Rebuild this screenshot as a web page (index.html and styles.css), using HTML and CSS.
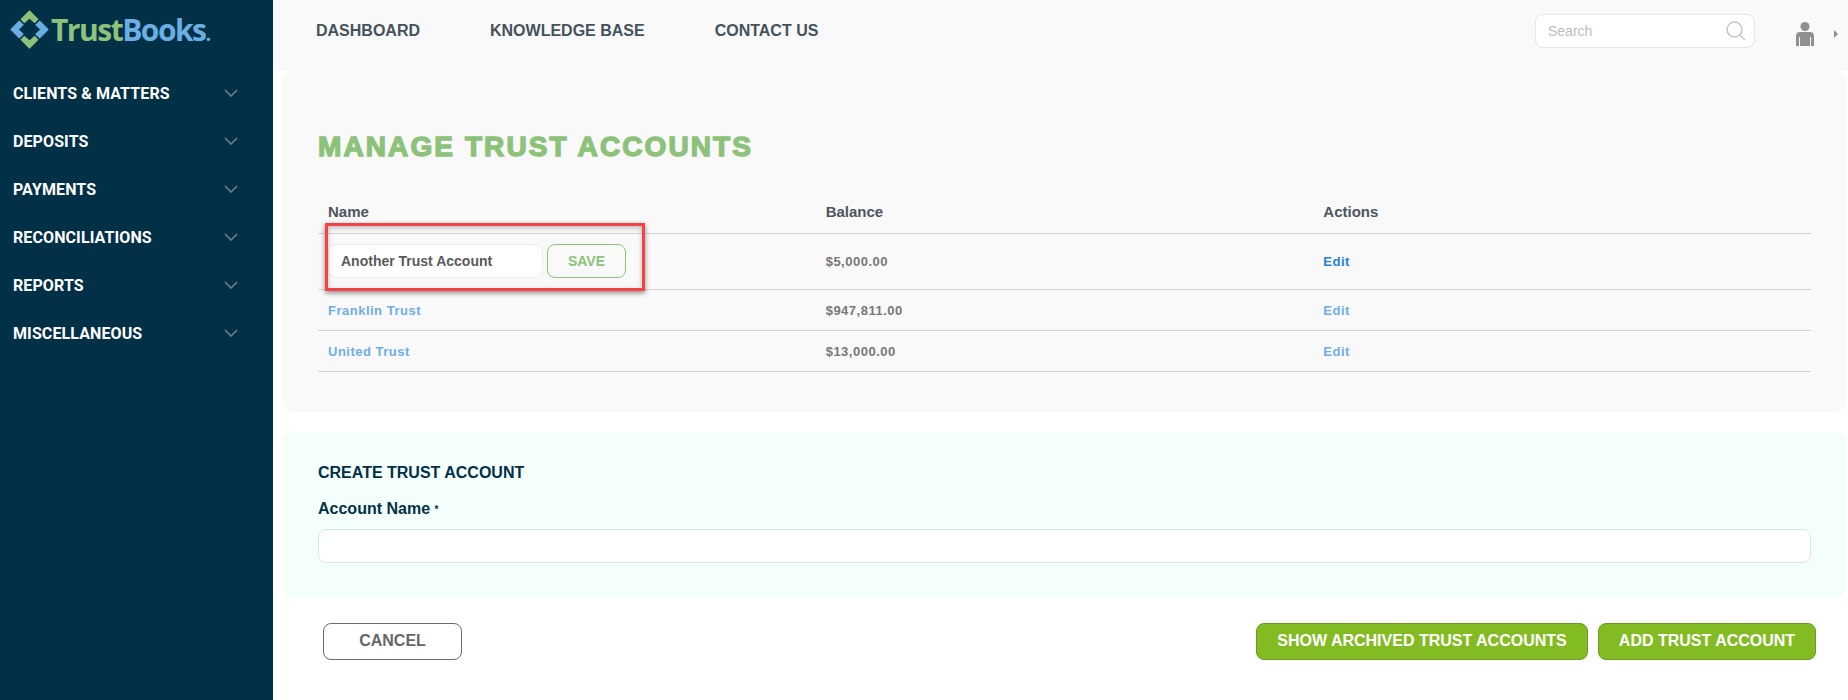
FILE: index.html
```html
<!DOCTYPE html>
<html lang="en">
<head>
<meta charset="utf-8">
<title>TrustBooks - Manage Trust Accounts</title>
<link rel="stylesheet" href="styles.css">
</head>
<body>
<div class="app">
  <aside class="sidebar">
    <div class="logo">
      <svg class="logo-mark" width="41" height="41" viewBox="0 0 36 36">
        <path class="mark-green" d="M18 2 L25 9 L22.500 11.500 L18 7.500 L13.500 11.500 L11 9 Z"/>
        <path class="mark-green" d="M18 34 L25 27 L22.500 24.500 L18 28.500 L13.500 24.500 L11 27 Z"/>
        <path class="mark-blue" d="M2 18 L9 11 L12 14 L7.500 18 L12 22 L9 25 Z"/>
        <path class="mark-blue" d="M34 18 L27 11 L24 14 L28.500 18 L24 22 L27 25 Z"/>
      </svg>
      <span class="logo-text"><span class="logo-trust">Trust</span><span class="logo-books">Books</span><span class="logo-dot">.</span></span>
    </div>
    <nav class="side-nav">
      <a class="side-item">CLIENTS &amp; MATTERS<svg class="chev" width="14" height="8" viewBox="0 0 14 8"><path d="M1 1 L7 7 L13 1"/></svg></a>
      <a class="side-item">DEPOSITS<svg class="chev" width="14" height="8" viewBox="0 0 14 8"><path d="M1 1 L7 7 L13 1"/></svg></a>
      <a class="side-item">PAYMENTS<svg class="chev" width="14" height="8" viewBox="0 0 14 8"><path d="M1 1 L7 7 L13 1"/></svg></a>
      <a class="side-item">RECONCILIATIONS<svg class="chev" width="14" height="8" viewBox="0 0 14 8"><path d="M1 1 L7 7 L13 1"/></svg></a>
      <a class="side-item">REPORTS<svg class="chev" width="14" height="8" viewBox="0 0 14 8"><path d="M1 1 L7 7 L13 1"/></svg></a>
      <a class="side-item">MISCELLANEOUS<svg class="chev" width="14" height="8" viewBox="0 0 14 8"><path d="M1 1 L7 7 L13 1"/></svg></a>
    </nav>
  </aside>
  <div class="main">
    <header class="topbar">
      <nav class="top-nav">
        <a>DASHBOARD</a>
        <a>KNOWLEDGE BASE</a>
        <a>CONTACT US</a>
      </nav>
      <div class="top-right">
        <div class="search">
          <span class="search-text">Search</span>
          <svg width="20" height="20" viewBox="0 0 20 20"><circle cx="8.500" cy="8.500" r="7.500"/><path d="M14 14 L19 19"/></svg>
        </div>
        <svg class="user" width="18" height="24" viewBox="0 0 18 24"><circle cx="9" cy="4.500" r="4.500"/><path d="M0 24 V14 Q0 10 4 10 H14 Q18 10 18 14 V24 H15 V15 H14 V24 H4 V15 H3 V24 Z"/></svg>
        <span class="caret"></span>
      </div>
    </header>
    <section class="panel">
      <h1 class="title">MANAGE TRUST ACCOUNTS</h1>
      <table class="accounts">
        <thead>
          <tr><th>Name</th><th>Balance</th><th>Actions</th></tr>
        </thead>
        <tbody>
          <tr class="row-edit">
            <td>
              <div class="edit-cell">
                <span class="name-input">Another Trust Account</span>
                <span class="save">SAVE</span>
                <span class="highlight"></span>
              </div>
            </td>
            <td>$5,000.00</td>
            <td><a class="edit-strong">Edit</a></td>
          </tr>
          <tr><td><a>Franklin Trust</a></td><td>$947,811.00</td><td><a>Edit</a></td></tr>
          <tr><td><a>United Trust</a></td><td>$13,000.00</td><td><a>Edit</a></td></tr>
        </tbody>
      </table>
    </section>
    <section class="create">
      <h2>CREATE TRUST ACCOUNT</h2>
      <label>Account Name <span class="req">*</span></label>
      <div class="text-input"></div>
    </section>
    <footer class="actions">
      <button class="btn-cancel">CANCEL</button>
      <div class="actions-right">
        <button class="btn-green btn-show">SHOW ARCHIVED TRUST ACCOUNTS</button>
        <button class="btn-green btn-add">ADD TRUST ACCOUNT</button>
      </div>
    </footer>
  </div>
</div>
</body>
</html>
```
FILE: styles.css
```css
* { box-sizing: border-box; }
html, body { margin: 0; height: 700px; overflow: hidden; background: #fff; }
body { font-family: "Liberation Sans", Arial, sans-serif; color: #555; }
.app { display: flex; height: 700px; }

.sidebar { width: 273px; flex: none; background: #023047; }
.logo { display: flex; align-items: center; height: 59px; padding-left: 9px; }
.logo-mark { flex: none; }
.mark-green { fill: #8dc27a; stroke: #8dc27a; stroke-width: 1.500; stroke-linejoin: round; }
.mark-blue { fill: #6aaee4; stroke: #6aaee4; stroke-width: 1.500; stroke-linejoin: round; }
.logo-text { margin-left: 1px; font-family: "Open Sans", sans-serif; font-weight: 700; font-size: 30px; letter-spacing: -1.500px; line-height: 1; }
.logo-trust { color: #8dc27a; }
.logo-books { color: #6aaee4; }
.logo-dot { color: #6aaee4; font-size: 20px; }
.side-nav { display: flex; flex-direction: column; padding-top: 10px; }
.side-item { display: flex; align-items: center; justify-content: space-between; height: 48px; padding: 0 35px 0 13px; font-family: Roboto, sans-serif; font-weight: 700; font-size: 16px; letter-spacing: .1px; color: #fff; }
.chev { fill: none; stroke: #6d7f86; stroke-width: 1.600; }

.main { flex: 1; min-width: 0; display: flex; flex-direction: column; }
.topbar { display: flex; align-items: center; justify-content: space-between; height: 71px; background: #f9f9f9; padding: 0 9px 10px 43px; }
.top-nav { display: flex; gap: 70px; margin-top: 1px; font-weight: 700; font-size: 16px; color: #45525c; }
.top-right { display: flex; align-items: center; padding-right: 1px; }
.search { display: flex; align-items: center; justify-content: space-between; width: 220px; height: 34px; padding: 0 8px 0 12px; background: #fff; border: 1px solid #e6e6e6; border-radius: 8px; }
.search-text { font-size: 14px; color: #bdbdbd; }
.search svg { fill: none; stroke: #c6c6c6; stroke-width: 1.500; }
.user { margin: 7px 0 0 41px; fill: #8f8f8f; }
.caret { margin: 7px 0 0 20px; width: 0; height: 0; border-left: 4px solid #8f8f8f; border-top: 4px solid transparent; border-bottom: 4px solid transparent; }

.panel { margin: 0 2px 0 10px; height: 341px; padding: 56px 35px 0 35px; background: #f9f9f9; border-radius: 10px; }
.title { margin: 0; font-size: 28px; line-height: 40px; font-weight: 700; color: #8dc27a; -webkit-text-stroke: 1.400px #8dc27a; letter-spacing: 2.100px; }
.accounts { width: 100%; table-layout: fixed; border-collapse: collapse; margin-top: 24px; }
.accounts th { height: 42px; padding: 0 10px; text-align: left; font-size: 15px; color: #4d5560; border-bottom: 1px solid #d2d2d2; }
.accounts td { height: 41px; padding: 1px 10px 0; font-size: 13px; font-weight: 700; letter-spacing: .5px; color: #777; border-bottom: 1px solid #d2d2d2; }
.accounts .row-edit td { height: 56px; padding-top: 0; }
.accounts a { color: #6fade8; }
.accounts .edit-strong { color: #2480d8; }
.edit-cell { position: relative; display: flex; align-items: center; gap: 4px; letter-spacing: 0; }
.name-input { width: 215px; height: 34px; padding-left: 12px; line-height: 32px; background: #fff; border: 1px solid #ececec; border-radius: 8px; font-size: 14px; color: #5a5a5a; }
.save { width: 79px; height: 34px; line-height: 32px; text-align: center; border: 1px solid #8dc27a; border-radius: 8px; font-size: 14px; color: #8dc27a; }
.highlight { position: absolute; left: -3px; top: -21px; width: 320px; height: 68px; border: 3px solid #f44245; box-shadow: 0 2px 5px rgba(0,0,0,.45), inset 0 2px 5px rgba(0,0,0,.25); pointer-events: none; }

.create { margin: 20px 2px 0 10px; height: 166px; padding: 31px 35px 0 35px; background: #f4fffb; border-radius: 10px; }
.create h2 { margin: 0; font-size: 16px; line-height: 20px; font-weight: 700; color: #023047; }
.create label { display: block; margin-top: 16px; font-size: 16px; line-height: 20px; font-weight: 700; color: #023047; }
.req { font-size: 10px; vertical-align: 1px; }
.text-input { margin-top: 9px; height: 34px; background: #fff; border: 1px solid #d2ebe4; border-radius: 8px; }

.actions { display: flex; justify-content: space-between; align-items: center; padding: 25px 32px 0 50px; }
.actions button { font-family: inherit; font-weight: 700; font-size: 16px; height: 37px; border-radius: 8px; padding: 0 0 2px; white-space: nowrap; }
.btn-cancel { width: 139px; background: #fff; border: 1px solid #6b6b6b; color: #666; }
.actions-right { display: flex; gap: 10px; }
.btn-green { background: #83bc22; border: 1px solid #6d9a20; color: #fff; }
.btn-show { width: 332px; }
.btn-add { width: 218px; }
```
